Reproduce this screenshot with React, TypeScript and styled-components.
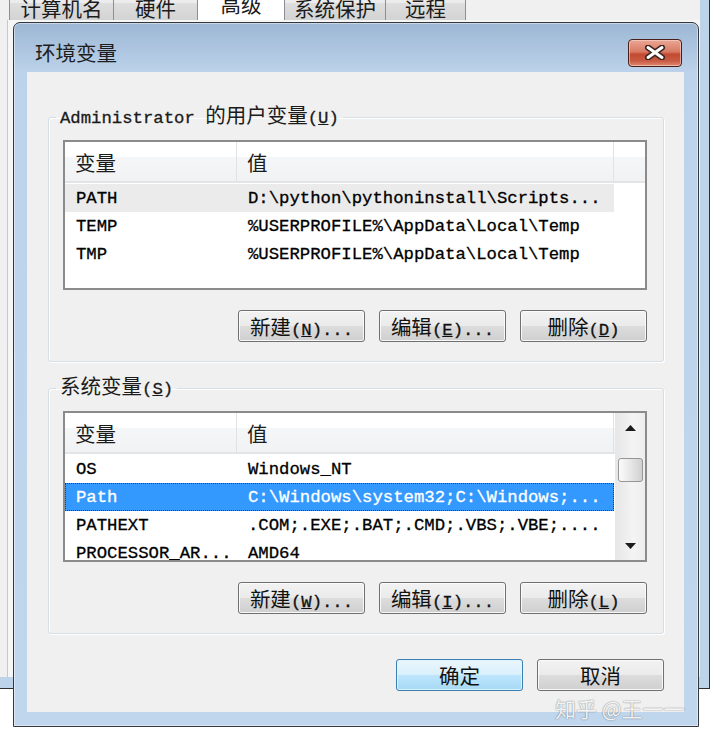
import React from "react"
import styled, { createGlobalStyle } from "styled-components"

const SANS = `"Noto Sans CJK SC", "Noto Sans", sans-serif`
const MONO = `"Liberation Mono", "DejaVu Sans Mono", monospace`

const GlobalStyle = createGlobalStyle`
    html, body {
        margin: 0;
        padding: 0;
        background: #fff;
    }
    body {
        font-family: ${SANS};
    }
`

const Desktop = styled.div`
    position: relative;
    width: 720px;
    height: 741px;
    overflow: hidden;
    background: #fff;
    font-family: ${SANS};
    font-size: 20.5px;
    color: #1b1b1b;
`

// window behind the dialog
const BackWindow = styled.div`
    position: absolute;
    left: 0;
    top: 0;
    width: 710px;
    height: 689px;
    box-sizing: border-box;
    display: flex;
    flex-direction: column;
    padding: 0 9px 11px 0;
    background: #bdd3ea;
    border-right: 1px solid #2e2e2e;
    border-bottom: 1px solid #2e2e2e;
`

const BackClient = styled.div`
    flex: 1;
    display: flex;
    flex-direction: column;
    background: #f0f0f0;
`

const TabStrip = styled.div`
    flex: none;
    height: 20px;
    display: flex;
    align-items: flex-end;
    padding-left: 10px;
    overflow: hidden;
`

const Tab = styled.div<{ $w: number; $active?: boolean }>`
    flex: none;
    width: ${(p) => p.$w}px;
    height: 34px;
    box-sizing: border-box;
    margin-left: -1px;
    display: flex;
    align-items: flex-end;
    justify-content: center;
    padding-bottom: ${(p) => (p.$active ? 4 : 0)}px;
    line-height: 24px;
    border: 1px solid #8c8e94;
    border-bottom: none;
    border-radius: 2px 2px 0 0;
    background: ${(p) =>
        p.$active ? "#fff" : "linear-gradient(#f3f3f3, #ebebeb 50%, #dedede 50%, #d3d3d3)"};
`

const TabPanel = styled.div`
    flex: 1;
    margin-left: 7px;
    border-left: 1px solid #c6c8cc;
    background: #f6f6f6;
`

// the dialog itself
const Dialog = styled.div`
    position: absolute;
    left: 13px;
    top: 22px;
    width: 686px;
    height: 705px;
    box-sizing: border-box;
    display: flex;
    flex-direction: column;
    padding: 0 14px 14px 13px;
    border: 1px solid #34373c;
    border-radius: 7px 7px 0 0;
    background: linear-gradient(#9db7d4 0px, #afc7e1 30px, #bdd3eb 50px, #c0d6ed 100%);
    box-shadow: inset 0 0 0 1px rgba(255, 255, 255, 0.45);
`

const TitleBar = styled.div`
    flex: none;
    height: 49px;
    box-sizing: border-box;
    display: flex;
    align-items: center;
    justify-content: space-between;
    padding: 8px 2px 0 8px;
`

const Title = styled.span`
    font-size: 20.5px;
    color: #1e1e1e;
`

const CloseButton = styled.div`
    width: 54px;
    height: 28px;
    margin-top: 2px;
    box-sizing: border-box;
    display: flex;
    align-items: center;
    justify-content: center;
    border: 1px solid #4a1f1a;
    border-radius: 4px;
    background: linear-gradient(#eaa795 0%, #d97a64 45%, #c24a31 55%, #c95a42 80%, #de8a72 100%);
    box-shadow: inset 0 0 0 1px rgba(255, 220, 210, 0.55);
`

const Client = styled.div`
    flex: 1;
    display: flex;
    flex-direction: column;
    box-sizing: border-box;
    padding: 34px 20px 20px 21px;
    background: #f0f0f0;
`

const Group = styled.fieldset<{ $gap?: number }>`
    margin: ${(p) => p.$gap ?? 0}px 0 0 0;
    padding: 0;
    min-width: 0;
    border: 1px solid #d5dfe5;
    border-radius: 3px;
    box-shadow: inset 1px 1px 0 #fff, 1px 1px 0 #fff;
`

const Legend = styled.legend`
    margin-left: 7px;
    padding: 0 4px 6px 4px;
    height: 22px;
    box-sizing: border-box;
    line-height: 16px;
    font-size: 20.5px;
    color: #1b1b1b;
    white-space: nowrap;
`

const GroupBody = styled.div`
    display: flex;
    flex-direction: column;
    padding: 12px 16px 19px 14px;
`

const Latin = styled.span`
    font-family: ${MONO};
    font-size: 17.3px;
    -webkit-text-stroke: 0.3px currentColor;
`

const ListView = styled.div<{ $h: number }>`
    height: ${(p) => p.$h}px;
    box-sizing: border-box;
    display: flex;
    border: 2px solid #8b8b8b;
    background: #fff;
    overflow: hidden;
`

const ListTable = styled.div`
    flex: 1;
    min-width: 0;
    display: flex;
    flex-direction: column;
`

const HeaderRow = styled.div`
    flex: none;
    height: 41px;
    box-sizing: border-box;
    display: flex;
    border-bottom: 2px solid #e3e4e6;
    background: linear-gradient(#ffffff 0%, #ffffff 38%, #f5f6f8 38%, #f1f2f4 100%);
`

const HeaderCell = styled.div<{ $w?: number }>`
    ${(p) => (p.$w ? `width: ${p.$w}px; flex: none;` : "flex: 1;")}
    box-sizing: border-box;
    display: flex;
    align-items: center;
    padding-left: 10px;
    border-right: ${(p) => (p.$w ? "1px solid #e1e2e4" : "none")};
    font-size: 20.5px;
    color: #1b1b1b;
`

const Rows = styled.div`
    padding-top: 1px;
`

const Row = styled.div<{ $state?: "hover" | "selected" }>`
    width: 549px;
    height: 28px;
    box-sizing: border-box;
    display: flex;
    padding-top: 2px;
    font-family: ${MONO};
    font-size: 17.3px;
    line-height: 26px;
    -webkit-text-stroke: 0.3px currentColor;
    color: ${(p) => (p.$state === "selected" ? "#fff" : "#000")};
    background: ${(p) =>
        p.$state === "selected" ? "#3399ff" : p.$state === "hover" ? "#ebebeb" : "transparent"};
    outline: ${(p) => (p.$state === "selected" ? "1px dotted #0b3f80" : "none")};
    outline-offset: -1px;
`

const Cell = styled.div<{ $w: number }>`
    flex: none;
    width: ${(p) => p.$w}px;
    box-sizing: border-box;
    padding-left: 11px;
    white-space: nowrap;
    overflow: hidden;
`

const ScrollBar = styled.div`
    flex: none;
    width: 29px;
    display: flex;
    flex-direction: column;
    border-left: 1px solid #e8e8e8;
    background: linear-gradient(90deg, #e7e7e7, #f4f4f4 60%, #ededed);
`

const ScrollArrow = styled.div`
    flex: none;
    height: 29px;
    display: flex;
    align-items: center;
    justify-content: center;
`

const ScrollTrack = styled.div`
    flex: 1;
    padding: 16px 2px 0 2px;
`

const Thumb = styled.div`
    height: 24px;
    box-sizing: border-box;
    border: 1px solid #969696;
    border-radius: 3px;
    background: linear-gradient(90deg, #fbfbfb, #e9e9e9 45%, #d0d0d0);
`

const ButtonRow = styled.div<{ $top: number }>`
    display: flex;
    justify-content: flex-end;
    gap: 14px;
    margin-top: ${(p) => p.$top}px;
`

const Button = styled.div<{ $primary?: boolean }>`
    width: 127px;
    height: 32px;
    box-sizing: border-box;
    display: flex;
    align-items: center;
    justify-content: center;
    white-space: nowrap;
    font-size: 20.5px;
    color: #111;
    border: 1px solid ${(p) => (p.$primary ? "#3c7fb1" : "#707070")};
    border-radius: 3px;
    background: ${(p) =>
        p.$primary
            ? "linear-gradient(#eaf6fd, #d9f0fc 50%, #bee6fd 50%, #a7d9f5)"
            : "linear-gradient(#f2f2f2, #ebebeb 50%, #dddddd 50%, #cfcfcf)"};
    box-shadow: inset 0 0 0 1px ${(p) => (p.$primary ? "rgba(220,245,255,0.9)" : "rgba(252,252,252,0.9)")};
`

const Watermark = styled.div`
    position: absolute;
    left: 555px;
    top: 695px;
    font-size: 21px;
    line-height: 26px;
    white-space: nowrap;
    color: rgba(255, 255, 255, 0.92);
    text-shadow: 0 0 1px rgba(0, 0, 0, 0.45), 0 0 2px rgba(0, 0, 0, 0.2);
`

const Label: React.FC<{ cjk: string; mn: string; tail?: string }> = ({ cjk, mn, tail = "" }) => (
    <span>
        {cjk}
        <Latin>
            (<u>{mn}</u>){tail}
        </Latin>
    </span>
)

type Entry = { name: string; value: string; state?: "hover" | "selected" }

const userVars: Entry[] = [
    { name: "PATH", value: "D:\\python\\pythoninstall\\Scripts...", state: "hover" },
    { name: "TEMP", value: "%USERPROFILE%\\AppData\\Local\\Temp" },
    { name: "TMP", value: "%USERPROFILE%\\AppData\\Local\\Temp" },
]

const systemVars: Entry[] = [
    { name: "OS", value: "Windows_NT" },
    { name: "Path", value: "C:\\Windows\\system32;C:\\Windows;...", state: "selected" },
    { name: "PATHEXT", value: ".COM;.EXE;.BAT;.CMD;.VBS;.VBE;...." },
    { name: "PROCESSOR_AR...", value: "AMD64" },
]

const Arrow: React.FC<{ down?: boolean }> = ({ down }) => (
    <svg width="11" height="6" viewBox="0 0 11 6">
        <path d={down ? "M0 0 H11 L5.5 6 Z" : "M0 6 H11 L5.5 0 Z"} fill="#1c1c1c" />
    </svg>
)

const VarList: React.FC<{ rows: Entry[]; height: number; scroll?: boolean }> = ({ rows, height, scroll }) => (
    <ListView $h={height}>
        <ListTable>
            <HeaderRow>
                <HeaderCell $w={172}>变量</HeaderCell>
                <HeaderCell $w={377}>值</HeaderCell>
                <HeaderCell />
            </HeaderRow>
            <Rows>
                {rows.map((r) => (
                    <Row key={r.name} $state={r.state}>
                        <Cell $w={172}>{r.name}</Cell>
                        <Cell $w={377}>{r.value}</Cell>
                    </Row>
                ))}
            </Rows>
        </ListTable>
        {scroll && (
            <ScrollBar>
                <ScrollArrow>
                    <Arrow />
                </ScrollArrow>
                <ScrollTrack>
                    <Thumb />
                </ScrollTrack>
                <ScrollArrow>
                    <Arrow down />
                </ScrollArrow>
            </ScrollBar>
        )}
    </ListView>
)

const tabs = [
    { label: "计算机名", w: 105 },
    { label: "硬件", w: 85 },
    { label: "高级", w: 88, active: true },
    { label: "系统保护", w: 102 },
    { label: "远程", w: 81 },
]

const App: React.FC = () => {
    return (
        <Desktop>
            <GlobalStyle />
            <BackWindow>
                <BackClient>
                    <TabStrip>
                        {tabs.map((t) => (
                            <Tab key={t.label} $w={t.w} $active={t.active}>
                                {t.label}
                            </Tab>
                        ))}
                    </TabStrip>
                    <TabPanel />
                </BackClient>
            </BackWindow>

            <Dialog>
                <TitleBar>
                    <Title>环境变量</Title>
                    <CloseButton>
                        <svg width="22" height="15" viewBox="0 0 22 15">
                            <path d="M4 2.5 L18 12.5 M18 2.5 L4 12.5" stroke="#3a2622" strokeWidth="6" strokeLinecap="round" />
                            <path d="M4 2.5 L18 12.5 M18 2.5 L4 12.5" stroke="#fff" strokeWidth="3" strokeLinecap="round" />
                        </svg>
                    </CloseButton>
                </TitleBar>
                <Client>
                    <Group>
                        <Legend>
                            <Latin>Administrator </Latin>的用户变量<Latin>(<u>U</u>)</Latin>
                        </Legend>
                        <GroupBody>
                            <VarList rows={userVars} height={150} />
                            <ButtonRow $top={20}>
                                <Button><Label cjk="新建" mn="N" tail="..." /></Button>
                                <Button><Label cjk="编辑" mn="E" tail="..." /></Button>
                                <Button><Label cjk="删除" mn="D" /></Button>
                            </ButtonRow>
                        </GroupBody>
                    </Group>

                    <Group $gap={15}>
                        <Legend>
                            系统变量<Latin>(<u>S</u>)</Latin>
                        </Legend>
                        <GroupBody>
                            <VarList rows={systemVars} height={151} scroll />
                            <ButtonRow $top={20}>
                                <Button><Label cjk="新建" mn="W" tail="..." /></Button>
                                <Button><Label cjk="编辑" mn="I" tail="..." /></Button>
                                <Button><Label cjk="删除" mn="L" /></Button>
                            </ButtonRow>
                        </GroupBody>
                    </Group>

                    <ButtonRow $top={25}>
                        <Button $primary>确定</Button>
                        <Button>取消</Button>
                    </ButtonRow>
                </Client>
            </Dialog>

            <Watermark>知乎 @王一一</Watermark>
        </Desktop>
    )
}

export default App
